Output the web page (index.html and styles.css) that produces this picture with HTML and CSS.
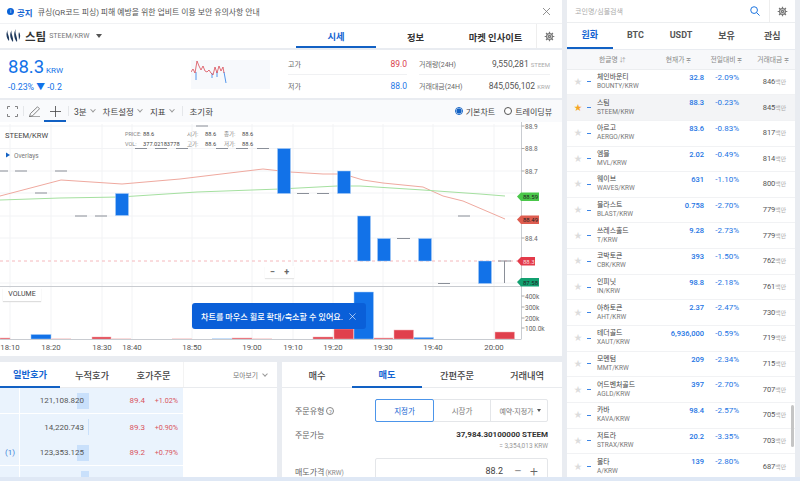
FILE: index.html
```html
<!DOCTYPE html>
<html lang="ko">
<head>
<meta charset="utf-8">
<title>STEEM/KRW</title>
<link rel="stylesheet" href="styles.css">
</head>
<body>
<div class="page">
<main class="main">
  <section class="notice">
    <span class="notice-dot">i</span><b class="notice-tag">공지</b>
    <span class="notice-text">큐싱(QR코드 피싱) 피해 예방을 위한 업비트 이용 보안 유의사항 안내</span>
    <svg class="notice-close" viewBox="0 0 9 9"><path d="M1 1l7 7M8 1L1 8"/></svg>
  </section>

  <section class="head">
    <div class="coin">
      <svg class="steem" viewBox="0 0 15 14"><path d="M2 1C0 4 4 7 3 12C1 10-1 5 2 1ZM6 1C4 4 8 8 7 13C4 10 3 5 6 1ZM10 0C8 4 12 8 11 13C8 10 7 4 10 0ZM13 3c2 3 1 6 0 8C13 8 12 6 13 3Z"/></svg>
      <b class="coin-name">스팀</b><span class="coin-pair">STEEM/KRW</span><span class="caret"></span>
    </div>
    <nav class="head-tabs">
      <a class="head-tab on">시세</a><a class="head-tab">정보</a><a class="head-tab">마켓 인사이트</a>
    </nav>
    <div class="gear-cell"><svg class="gear" viewBox="0 0 16 16"><circle cx="8" cy="8" r="4.2"/><circle cx="8" cy="8" r="1.6"/><path d="M8 1v2.5M8 12.5V15M1 8h2.5M12.5 8H15M3 3l1.8 1.8M11.2 11.2L13 13M13 3l-1.8 1.8M4.8 11.2L3 13"/></svg></div>
  </section>

  <section class="quote">
    <div class="price-box">
      <div class="price-line"><span class="price">88.3</span><span class="price-unit">KRW</span></div>
      <div class="price-change">-0.23% ▼ -0.2</div>
    </div>
    <div class="spark">
      <svg viewBox="0 0 79 29" width="79" height="29"><polyline class="sp-blue" points="5,12 5,20"/><polyline class="sp-blue" points="21,13 21,18"/><polyline class="sp-blue" points="26,12 26,17"/><polyline class="sp-blue" points="33,12 35,23"/><polyline class="sp-red" points="0,12 2,9 4,13 6,1 8,6 10,10 12,6 14,11 16,12 18,10 20,13 22,15 24,7 26,13 28,6 30,11 32,7 33,13"/></svg>
    </div>
    <div class="stats">
      <div class="stat-col narrow">
        <div class="stat"><span class="stat-k">고가</span><span class="up">89.0</span></div>
        <div class="stat"><span class="stat-k">저가</span><span class="down">88.0</span></div>
      </div>
      <div class="stat-col">
        <div class="stat"><span class="stat-k">거래량(24H)</span><span class="stat-v">9,550,281 <i>STEEM</i></span></div>
        <div class="stat"><span class="stat-k">거래대금(24H)</span><span class="stat-v">845,056,102 <i>KRW</i></span></div>
      </div>
    </div>
  </section>

  <section class="chart-panel">
    <div class="toolbar">
      <svg class="tool-icon" viewBox="0 0 11 11"><path d="M0.5 3V.5H3M8 .5h2.500V3M10.500 8v2.500H8M3 10.500H.5V8"/></svg>
      <span class="tool-sep"></span>
      <svg class="tool-icon" viewBox="0 0 11 11"><path d="M.5 10.500l1-3L8.500.8l2 2-7 7ZM0 10.800h11"/></svg>
      <span class="tool-cross"><svg class="tool-icon" viewBox="0 0 11 11"><path d="M5.500 0v11M0 5.500h11"/></svg></span>
      <span class="tool-sep after-cross"></span>
      <span class="tool-menu">3분<u></u></span>
      <span class="tool-menu">차트설정<u></u></span>
      <span class="tool-menu">지표<u></u></span>
      <span class="tool-sep wide"></span>
      <span class="tool-menu">초기화</span>
      <span class="radios">
        <span class="radio on"><em></em>기본차트</span>
        <span class="radio"><em></em>트레이딩뷰</span>
      </span>
    </div>
    <div class="chart">
      <svg class="chart-svg" viewBox="0 0 562 234" width="562" height="234">
        <g transform="translate(0,-122)">
        <g class="grid">
          <path d="M0 126H522M0 148.500H522M0 171H522M0 193H522M0 216H522M0 238H522M0 283H522"/>
          <path d="M10 124V339M51 124V339M102 124V339M132 124V339M192 124V339M252 124V339M293 124V339M333 124V339M383 124V339M433 124V339M494 124V339"/>
        </g>
        <polyline class="line-red" points="0,196 61,180 122,184 180,179 213,175 263,169 290,172 323,174 343,174 363,180 383,183 403,185 423,187 443,196 463,201 505,219"/>
        <polyline class="line-green" points="0,200 60,198 120,197 197,192 280,189 337,186 360,186 423,190 480,194 505,196"/>
        <path class="price-dash" d="M0 261H517"/>
        <path class="doji" d="M0 171h8M15 171h12M55 171h12M35 193h12M75 216h12M95 216h12M135 148.500h12M155 148.500h12M176 148.500h12M216 148.500h12M236 148.500h12M257 148.500h12M196 126h12M297 193.500h12M317 193.500h12M397 238.500h13M438 283.500h12M458 216h12M498 261h13M504.500 261v22"/>
        <g class="blue">
          <rect x="115.500" y="193.500" width="13" height="22"/><rect x="277.500" y="148.500" width="13" height="45"/><rect x="337.500" y="171" width="13" height="22.500"/><rect x="357.500" y="216" width="13" height="45"/><rect x="377.500" y="238.500" width="13" height="22.500"/><rect x="418.500" y="238.500" width="13" height="22.500"/><rect x="478.500" y="261" width="13" height="22.500"/>
          <rect x="31" y="334.500" width="20" height="4.500"/><rect x="354" y="292" width="19.500" height="47"/><rect x="414" y="337.500" width="19.500" height="1.500"/>
        </g>
        <g class="red">
          <rect x="0" y="338" width="10" height="1"/><rect x="92" y="337" width="19" height="2"/><rect x="232" y="338" width="20" height="1"/><rect x="313" y="337" width="20" height="2"/><rect x="334" y="329" width="19.500" height="10"/><rect x="374" y="338" width="19" height="1"/><rect x="394" y="330" width="19.500" height="9"/><rect x="495" y="332" width="19.500" height="7"/>
        </g>
        <g class="pale-red"><rect x="51" y="338" width="20" height="1"/><rect x="111" y="338" width="20" height="1"/><rect x="172" y="338" width="20" height="1"/><rect x="252" y="338" width="20" height="1"/></g>
        <rect class="pale-blue" x="212" y="338" width="20" height="1"/>
        <path class="axis" d="M521.500 122V339M0 286.500H521.500M0 339.500H521.500"/>
        <path class="axis-tick" d="M521.500 126h3M521.500 148.500h3M521.500 171h3M521.500 238h3M521.500 296h3M521.500 307h3M521.500 318h3M521.500 328h3"/>
        <g class="ax-label">
          <text x="525" y="129">88.9</text><text x="525" y="151">88.8</text><text x="525" y="174">88.7</text><text x="525" y="241">88.4</text>
          <text x="525" y="299">400k</text><text x="525" y="310">300k</text><text x="525" y="321">200k</text><text x="525" y="331">100.0k</text>
        </g>
        <g class="time">
          <text x="10" y="350">18:10</text><text x="51" y="350">18:20</text><text x="102" y="350">18:30</text><text x="132" y="350">18:40</text><text x="192" y="350">18:50</text><text x="252" y="350">19:00</text><text x="293" y="350">19:10</text><text x="333" y="350">19:20</text><text x="383" y="350">19:30</text><text x="433" y="350">19:40</text><text x="494" y="350">20:00</text>
        </g>
        <path class="t-green" d="M517 196.500l4-4h18v8.500h-18Z"/><text class="tag-txt" x="523" y="199.300">88.59</text>
        <path class="t-red" d="M517 219.500l4-4h18v8.500h-18Z"/><text class="tag-txt" x="523" y="222.300">88.49</text>
        <path class="t-now" d="M517 261l4-4h14v8.500h-14Z"/><text class="tag-txt white" x="523" y="263.800">88.3</text>
        <path class="t-teal" d="M517 282l4-4h18v8.500h-18Z"/><text class="tag-txt" x="523" y="284.800">87.58</text>
        <text class="sym" x="5" y="138">STEEM/KRW</text>
        <g class="legend">
          <text x="125" y="136">PRICE:</text><text class="lv" x="143" y="136">88.6</text><text x="187" y="136">시가:</text><text class="lv" x="205" y="136">88.6</text><text x="224" y="136">종가:</text><text class="lv" x="242" y="136">88.6</text>
          <text x="125" y="146">VOL:</text><text class="lv" x="143" y="146">377.02183778</text><text x="187" y="146">고가:</text><text class="lv" x="205" y="146">88.6</text><text x="224" y="146">저가:</text><text class="lv" x="242" y="146">88.6</text>
        </g>
        <path class="ov-arrow" d="M6 152.500l4 2.500-4 2.500Z"/><text class="overlays" x="14" y="158">Overlays</text>
        </g>
      </svg>
      <div class="zoomer"><span>−</span><span>+</span></div>
      <div class="vol-tag">VOLUME</div>
      <div class="toast">차트를 마우스 휠로 확대/축소할 수 있어요.<svg viewBox="0 0 8 8"><path d="M.5.5l7 7M7.500.5l-7 7"/></svg></div>
    </div>
  </section>

  <section class="bottom">
    <div class="book">
      <div class="tabs book-tabs">
        <a class="tab on">일반호가</a><a class="tab">누적호가</a><a class="tab">호가주문</a>
        <span class="gather">모아보기<u></u></span>
      </div>
      <div class="book-body">
        <div class="ask sep"><span class="ask-mark"></span><span class="ask-size"><s class="b12"></s>121,108.820</span><span class="ask-price">89.4</span><span class="ask-pct">+1.02%</span></div>
        <div class="ask"><span class="ask-mark"></span><span class="ask-size"><s class="b1"></s>14,220.743</span><span class="ask-price">89.3</span><span class="ask-pct">+0.90%</span></div>
        <div class="ask sep"><span class="ask-mark">(1)</span><span class="ask-size"><s class="b12"></s>123,353.125</span><span class="ask-price">89.2</span><span class="ask-pct">+0.79%</span></div>
        <div class="ask"><span class="ask-mark"></span><span class="ask-size"><s class="b8"></s></span><span class="ask-price"></span><span class="ask-pct"></span></div>
      </div>
    </div>
    <div class="order">
      <div class="tabs order-tabs">
        <a class="tab">매수</a><a class="tab on">매도</a><a class="tab">간편주문</a><a class="tab">거래내역</a>
      </div>
      <div class="order-body">
        <div class="order-row type">
          <span class="label">주문유형 <em class="help">?</em></span>
          <div class="seg"><span class="seg-a on">지정가</span><span class="seg-b">시장가</span><span class="seg-c">예약-지정가 <i></i></span></div>
        </div>
        <div class="order-row avail">
          <span class="label">주문가능</span>
          <div class="avail-v"><b>37,984.30100000 STEEM</b><small>= 3,354,013 KRW</small></div>
        </div>
        <div class="order-row">
          <span class="label">매도가격<small>(KRW)</small></span>
          <div class="input"><span>88.2</span><em>−</em><em>+</em></div>
        </div>
      </div>
    </div>
  </section>
</main>

<aside class="side">
  <div class="search">
    <span class="search-ph">코인명/심볼검색</span>
    <svg class="search-ic" viewBox="0 0 11 11"><circle cx="4.500" cy="4.500" r="3.700"/><path d="M7.300 7.300L10.500 10.500"/></svg>
    <div class="gear-cell side-gear"><svg class="gear" viewBox="0 0 16 16"><circle cx="8" cy="8" r="4.200"/><circle cx="8" cy="8" r="1.600"/><path d="M8 1v2.500M8 12.500V15M1 8h2.500M12.500 8H15M3 3l1.800 1.800M11.200 11.200L13 13M13 3l-1.800 1.800M4.800 11.200L3 13"/></svg></div>
  </div>
  <nav class="side-tabs"><a class="on">원화</a><a>BTC</a><a>USDT</a><a>보유</a><a>관심</a></nav>
  <div class="list-head"><span class="h-name">한글명 <i>⇵</i></span><span class="h-price">현재가 <i>≑</i></span><span class="h-chg">전일대비 <i>≑</i></span><span class="h-vol">거래대금 <i>≑</i></span></div>
  <div class="list">
    <div class="row"><span class="star">★</span><span class="mini"></span><span class="nm"><b>체인바운티</b><small>BOUNTY/KRW</small></span><span class="pr">32.8</span><span class="ch">-2.09%</span><span class="vo">846<small>백만</small></span></div>
    <div class="row sel"><span class="star fav">★</span><span class="mini"></span><span class="nm"><b>스팀</b><small>STEEM/KRW</small></span><span class="pr">88.3</span><span class="ch">-0.23%</span><span class="vo">845<small>백만</small></span></div>
    <div class="row"><span class="star">★</span><span class="mini"></span><span class="nm"><b>아르고</b><small>AERGO/KRW</small></span><span class="pr">83.6</span><span class="ch">-0.83%</span><span class="vo">817<small>백만</small></span></div>
    <div class="row"><span class="star">★</span><span class="mini"></span><span class="nm"><b>엠블</b><small>MVL/KRW</small></span><span class="pr">2.02</span><span class="ch">-0.49%</span><span class="vo">814<small>백만</small></span></div>
    <div class="row"><span class="star">★</span><span class="mini"></span><span class="nm"><b>웨이브</b><small>WAVES/KRW</small></span><span class="pr">631</span><span class="ch">-1.10%</span><span class="vo">800<small>백만</small></span></div>
    <div class="row"><span class="star">★</span><span class="mini"></span><span class="nm"><b>블라스트</b><small>BLAST/KRW</small></span><span class="pr">0.758</span><span class="ch">-2.70%</span><span class="vo">779<small>백만</small></span></div>
    <div class="row"><span class="star">★</span><span class="mini"></span><span class="nm"><b>쓰레스홀드</b><small>T/KRW</small></span><span class="pr">9.28</span><span class="ch">-2.73%</span><span class="vo">779<small>백만</small></span></div>
    <div class="row"><span class="star">★</span><span class="mini"></span><span class="nm"><b>코박토큰</b><small>CBK/KRW</small></span><span class="pr">393</span><span class="ch">-1.50%</span><span class="vo">762<small>백만</small></span></div>
    <div class="row"><span class="star">★</span><span class="mini"></span><span class="nm"><b>인피닛</b><small>IN/KRW</small></span><span class="pr">98.8</span><span class="ch">-2.18%</span><span class="vo">761<small>백만</small></span></div>
    <div class="row"><span class="star">★</span><span class="mini"></span><span class="nm"><b>아하토큰</b><small>AHT/KRW</small></span><span class="pr">2.37</span><span class="ch">-2.47%</span><span class="vo">730<small>백만</small></span></div>
    <div class="row"><span class="star">★</span><span class="mini"></span><span class="nm"><b>테더골드</b><small>XAUT/KRW</small></span><span class="pr">6,936,000</span><span class="ch">-0.59%</span><span class="vo">719<small>백만</small></span></div>
    <div class="row"><span class="star">★</span><span class="mini"></span><span class="nm"><b>모멘텀</b><small>MMT/KRW</small></span><span class="pr">209</span><span class="ch">-2.34%</span><span class="vo">715<small>백만</small></span></div>
    <div class="row"><span class="star">★</span><span class="mini"></span><span class="nm"><b>어드벤처골드</b><small>AGLD/KRW</small></span><span class="pr">397</span><span class="ch">-2.70%</span><span class="vo">707<small>백만</small></span></div>
    <div class="row"><span class="star">★</span><span class="mini"></span><span class="nm"><b>카바</b><small>KAVA/KRW</small></span><span class="pr">98.4</span><span class="ch">-2.57%</span><span class="vo">705<small>백만</small></span></div>
    <div class="row"><span class="star">★</span><span class="mini"></span><span class="nm"><b>저트라</b><small>STRAX/KRW</small></span><span class="pr">20.2</span><span class="ch">-3.35%</span><span class="vo">703<small>백만</small></span></div>
    <div class="row"><span class="star">★</span><span class="mini"></span><span class="nm"><b>볼타</b><small>A/KRW</small></span><span class="pr">139</span><span class="ch">-2.80%</span><span class="vo">687<small>백만</small></span></div>
    <span class="scroll-thumb"></span>
  </div>
</aside>
<div class="edge-band"></div>
</div>
</body>
</html>
```

FILE: styles.css
```css
* { box-sizing: border-box; margin: 0; padding: 0; }
html, body { width: 800px; height: 481px; overflow: hidden; }
body { background: #e9ecf1; font-family: Roboto, "Noto Sans CJK KR", sans-serif; color: #333; font-size: 8px; }
i, em, u, s { font-style: normal; text-decoration: none; }
.page { position: relative; display: grid; grid-template-columns: 562px 228px; column-gap: 5px; width: 800px; height: 481px; overflow: hidden; }

.main { display: flex; flex-direction: column; height: 481px; }
.notice { display: flex; align-items: center; height: 23px; background: #fff; padding: 0 10px 0 7px; flex: none; }
.notice-dot { width: 7px; height: 7px; border-radius: 50%; background: #0a63d8; color: #fff; font-size: 5px; line-height: 7px; text-align: center; }
.notice-tag { color: #1464d2; font-size: 8.5px; margin-left: 3px; }
.notice-text { color: #555; font-size: 7.900px; margin-left: 5px; flex: 1; }
.notice-close { width: 9px; height: 9px; fill: none; stroke: #777; stroke-width: .8; margin-right: 1px; }

.head { display: flex; height: 25px; background: #fff; border-top: 1px solid #f1f2f4; flex: none; }
.coin { display: flex; align-items: center; width: 296px; padding-left: 6px; }
.steem { width: 15px; height: 14px; fill: #1f3a5e; }
.coin-name { font-size: 11.500px; margin-left: 4px; color: #333; font-weight: 700; }
.coin-pair { font-size: 7px; color: #777; margin-left: 3px; }
.caret { width: 0; height: 0; border: 3.500px solid transparent; border-top: 4px solid #555; border-bottom: 0; margin-left: 7px; }
.head-tabs { display: grid; grid-template-columns: 80px 79px 81px; }
.head-tab { display: flex; align-items: center; justify-content: center; font-size: 9.300px; font-weight: 700; color: #333; padding-top: 1px; }
.head-tab.on { color: #1464d2; border-bottom: 2px solid #1261c4; }
.gear-cell { display: flex; align-items: center; justify-content: center; width: 26px; border-left: 1px solid #eee; }
.gear { width: 11px; height: 11px; fill: none; stroke: #777; stroke-width: 1.800; }

.quote { display: flex; height: 48px; margin-top: 2px; background: #fff; flex: none; }
.price-box { width: 191px; padding: 6px 0 0 8px; }
.price-line { display: flex; align-items: baseline; }
.price { font-size: 18.500px; line-height: 23px; color: #1272e8; font-weight: 400; }
.price-unit { font-size: 8px; color: #1272e8; margin-left: 2px; }
.price-change { font-size: 8.800px; color: #1272e8; line-height: 12px; margin-top: 2px; }
.spark { width: 79px; height: 29px; margin-top: 10px; background: #f7f9fc; }
.spark polyline { fill: none; stroke-width: .8; }
.sp-red { stroke: #d94a55; }
.sp-blue { stroke: #2a7de8; }
.stats { display: flex; margin-left: 18px; gap: 12px; }
.stat-col { width: 131px; }
.stat-col.narrow { width: 119px; }
.stat { display: flex; justify-content: space-between; align-items: center; height: 21px; margin-top: 4px; font-size: 8.500px; color: #555; }
.stat:first-child { border-bottom: 1px solid #f0f1f3; height: 22px; margin-top: 3px; }
.stat + .stat { margin-top: 0; }
.stat-k { font-size: 7px; color: #666; }
.stat-v i { font-size: 6px; color: #aaa; }
.up { color: #d9414e; }
.down { color: #1f78e6; }

.chart-panel { height: 256px; margin-top: 2px; flex: none; background: #fff; }
.toolbar { display: flex; align-items: center; height: 22px; background: #f9fafc; padding-left: 7px; position: relative; }
.tool-icon { width: 11px; height: 11px; fill: none; stroke: #666; stroke-width: .8; flex: none; }
.tool-sep { width: 1px; height: 10px; background: #e5e7ea; margin: 0 5px; flex: none; }
.tool-sep.after-cross { margin: 0 5px 0 2px; }
.tool-sep.wide { margin: 0 7px 0 0; }
.tool-cross { display: flex; align-items: center; justify-content: center; width: 22px; height: 22px; margin-left: 4px; border-bottom: 2px solid #1261c4; padding-top: 2px; flex: none; }
.tool-cross .tool-icon { stroke: #444; }
.tool-menu { font-size: 8.500px; color: #444; margin-right: 8px; display: flex; align-items: center; white-space: nowrap; }
.tool-menu u { width: 4px; height: 4px; border-right: .8px solid #999; border-bottom: .8px solid #999; transform: rotate(45deg) translate(-1px,-1px); margin-left: 4px; }
.radios { display: flex; gap: 9px; margin-left: auto; margin-right: 10px; }
.radio { display: flex; align-items: center; gap: 3px; font-size: 8px; color: #444; white-space: nowrap; }
.radio em { width: 8px; height: 8px; border: 1px solid #555; border-radius: 50%; background: #fff; }
.radio.on em { border-color: #1261c4; background: radial-gradient(circle, #1261c4 0 2.300px, #fff 2.800px); }

.chart { position: relative; height: 234px; width: 562px; overflow: hidden; background: #fff; }
.chart-svg { display: block; }
.grid path { stroke: #f2f3f5; stroke-width: 1; fill: none; }
.line-red { fill: none; stroke: #efa99f; stroke-width: 1; }
.line-green { fill: none; stroke: #a5e0a0; stroke-width: 1; }
.price-dash { stroke: #f5b8bc; stroke-width: 1; stroke-dasharray: 3 3; }
.doji { fill: none; stroke: #8a8f98; stroke-width: 1; }
.blue rect { fill: #1272e8; stroke: #a9cdf7; stroke-width: .5; }
.red rect { fill: #e0404d; stroke: #f3b2b6; stroke-width: .5; }
.pale-red rect { fill: #fbdcdc; }
.pale-blue { fill: #c6def9; }
.axis { fill: none; stroke: #c9ccd1; stroke-width: 1; }
.axis-tick { fill: none; stroke: #aaa; stroke-width: 1; }
.ax-label text { font-size: 6.500px; fill: #666; }
.time text { font-size: 7.800px; fill: #555; text-anchor: middle; }
.t-green { fill: #4ac74a; }
.t-red { fill: #de5d50; }
.t-now { fill: #e33a4a; }
.t-teal { fill: #12a070; }
.tag-txt { font-size: 6px; fill: #222; }
.tag-txt.white { fill: #fbdcdc; }
.sym { font-size: 7.500px; fill: #444; font-weight: 400; }
.legend text { font-size: 5.500px; fill: #888; }
.legend .lv { font-size: 5.700px; fill: #444; }
.ov-arrow { fill: #1261c4; }
.overlays { font-size: 6.500px; fill: #777; }
.zoomer { position: absolute; left: 265px; top: 144px; width: 29px; height: 12px; display: flex; justify-content: space-around; align-items: center; background: #fff; box-shadow: 0 1px 1px #e5e5e5; font-size: 9px; font-weight: 700; color: #666; }
.vol-tag { position: absolute; left: 3px; top: 166px; width: 38px; height: 13px; line-height: 12px; text-align: center; font-size: 7px; color: #444; background: #fff; box-shadow: 0 1px 1px #ddd; }
.toast { position: absolute; left: 192px; top: 181px; width: 174px; height: 26px; padding: 0 10px 0 9px; display: flex; align-items: center; justify-content: space-between; background: #0a5fd8; color: #fff; font-size: 8.100px; font-weight: 500; border-radius: 3px; white-space: nowrap; }
.toast svg { width: 7px; height: 7px; fill: none; stroke: #fff; stroke-width: .7; flex: none; }

.bottom { display: grid; grid-template-columns: 277px 280px; column-gap: 5px; margin-top: 6px; flex: 1; min-height: 0; }
.book, .order { background: #fff; overflow: hidden; }
.tabs { display: flex; height: 26px; border-bottom: 1px solid #e9ebee; }
.tab { display: flex; align-items: center; justify-content: center; font-size: 9.300px; font-weight: 500; color: #444; }
.tab.on { color: #1464d2; font-weight: 700; border-bottom: 2px solid #1261c4; margin-bottom: -1px; }
.book-tabs .tab { width: 60px; margin-right: 2px; }
.book-tabs .tab:last-of-type { border-right: 1px solid #f3f3f3; }
.gather { display: flex; align-items: center; margin-left: auto; margin-right: 9px; color: #777; font-size: 6.800px; }
.gather u { width: 4px; height: 4px; border-right: .8px solid #999; border-bottom: .8px solid #999; transform: rotate(45deg); margin: -2px 1px 0 5px; }
.book-body { width: 183px; background: #eaf3fd; }
.ask { display: grid; grid-template-columns: 20px 69px 56px 38px; align-items: center; height: 26px; font-size: 8px; }
.ask.sep { border-bottom: 1px solid #fff; }
.ask-mark { color: #3d7fd6; padding-left: 5px; border-right: 1px solid #fff; height: 100%; display: flex; align-items: center; }
.ask-size { position: relative; isolation: isolate; height: 100%; display: flex; align-items: center; justify-content: flex-end; padding-right: 5px; color: #555; }
.ask-size s { position: absolute; right: 0; top: 5px; height: 16px; background: #c9e0fb; z-index: -1; }
.b12 { width: 12px; } .b1 { width: 1px; } .b8 { width: 8px; }
.ask-price { text-align: right; color: #d9535e; font-size: 8px; }
.ask-pct { text-align: right; padding-right: 5px; color: #d9535e; font-size: 7.200px; }

.order-tabs .tab { width: 70px; flex: none; }
.order-body { padding: 11px 14px 0 13px; }
.order-row { display: flex; justify-content: space-between; align-items: center; }
.label { color: #666; font-size: 8px; white-space: nowrap; }
.label small { font-size: 6.500px; color: #888; margin-left: 1px; }
.help { display: inline-block; width: 8px; height: 8px; border: .7px solid #888; border-radius: 50%; text-align: center; font-size: 6px; line-height: 7px; color: #888; }
.seg { display: grid; grid-template-columns: 58px 56px 59px; width: 173px; height: 23px; border: 1px solid #e4e6e9; border-radius: 2px; }
.seg span { display: flex; align-items: center; justify-content: center; font-size: 7.500px; color: #777; }
.seg .on { color: #1464d2; border: 1px solid #4c95ea; margin: -1px 0 -1px -1px; border-radius: 2px; }
.seg-c { border-left: 1px solid #e4e6e9; font-size: 7px !important; }
.seg-c i { width: 0; height: 0; border: 2.200px solid transparent; border-top: 3px solid #555; border-bottom: 0; margin-left: 3px; }
.avail { align-items: flex-start; margin-top: 7px; height: 29px; }
.avail-v { display: flex; flex-direction: column; align-items: flex-end; }
.avail-v b { font-size: 8px; color: #333; line-height: 11px; }
.avail-v small { font-size: 6.500px; color: #999; margin-top: 2px; }
.input { display: flex; align-items: center; justify-content: flex-end; gap: 6px; width: 173px; height: 26px; border: 1px solid #e4e6e9; border-radius: 2px; padding-right: 8px; font-size: 9px; color: #444; }
.input span { margin-right: 4px; }
.input em { font-size: 14px; color: #666; font-weight: 300; width: 10px; text-align: center; }

.side { display: flex; flex-direction: column; height: 481px; background: #fff; overflow: hidden; }
.search { display: flex; align-items: center; height: 23px; flex: none; border-bottom: 1px solid #eceef0; }
.search-ph { flex: 1; padding-left: 8px; font-size: 7px; color: #aaa; }
.search-ic { width: 10px; height: 10px; fill: none; stroke: #1b74e0; stroke-width: 1.100; margin-right: 9px; }
.side-gear { width: 26px; height: 100%; }
.side-tabs { display: grid; grid-template-columns: repeat(5, 45.600px); height: 26px; flex: none; }
.side-tabs a { display: flex; align-items: center; justify-content: center; font-size: 9px; font-weight: 700; color: #555; padding-bottom: 2px; }
.side-tabs a.on { color: #1464d2; border-bottom: 2px solid #1261c4; }
.list-head { display: flex; align-items: center; height: 20.600px; flex: none; background: #f7f8fa; border-top: 1px solid #e9ecf1; border-bottom: 1px solid #eceef0; font-size: 6.800px; color: #888; }
.list-head i { font-size: 6px; color: #999; }
.h-name { margin-left: 32px; width: 67px; }
.h-price { width: 45px; }
.h-chg { width: 47px; }
.h-vol { width: 38px; }
.list { position: relative; flex: 1; min-height: 0; overflow: hidden; }
.row { display: grid; grid-template-columns: 7px 10px 66px 47px 35px 47px; align-items: center; height: 25.650px; padding-left: 7px; border-bottom: 1px solid #f1f2f4; white-space: nowrap; }
.row.sel { background: #f3f4f6; }
.star { font-size: 8px; color: #dcdcdc; line-height: 1; }
.star.fav { color: #f5a623; }
.mini { width: 4px; height: 1px; background: #3d86e6; margin-left: 6px; }
.nm { display: flex; flex-direction: column; margin-left: 6px; line-height: 9px; }
.nm b { font-size: 6.900px; font-weight: 400; color: #444; }
.nm small { font-size: 6.500px; color: #777; }
.pr, .ch { align-self: start; text-align: right; font-size: 7.500px; color: #1c74e4; margin-top: 3px; }
.pr { font-weight: 500; }
.ch { font-size: 8px; }
.vo { text-align: right; font-size: 7.500px; color: #555; margin-top: -1px; }
.vo small { font-size: 5.800px; color: #aaa; }
.scroll-thumb { position: absolute; right: 1px; top: 335px; width: 3px; height: 42px; border-radius: 2px; background: #c5c5c5; }
.edge-band { position: absolute; left: 0; right: 0; bottom: 0; height: 4px; background: #dfe8f5; }
```
